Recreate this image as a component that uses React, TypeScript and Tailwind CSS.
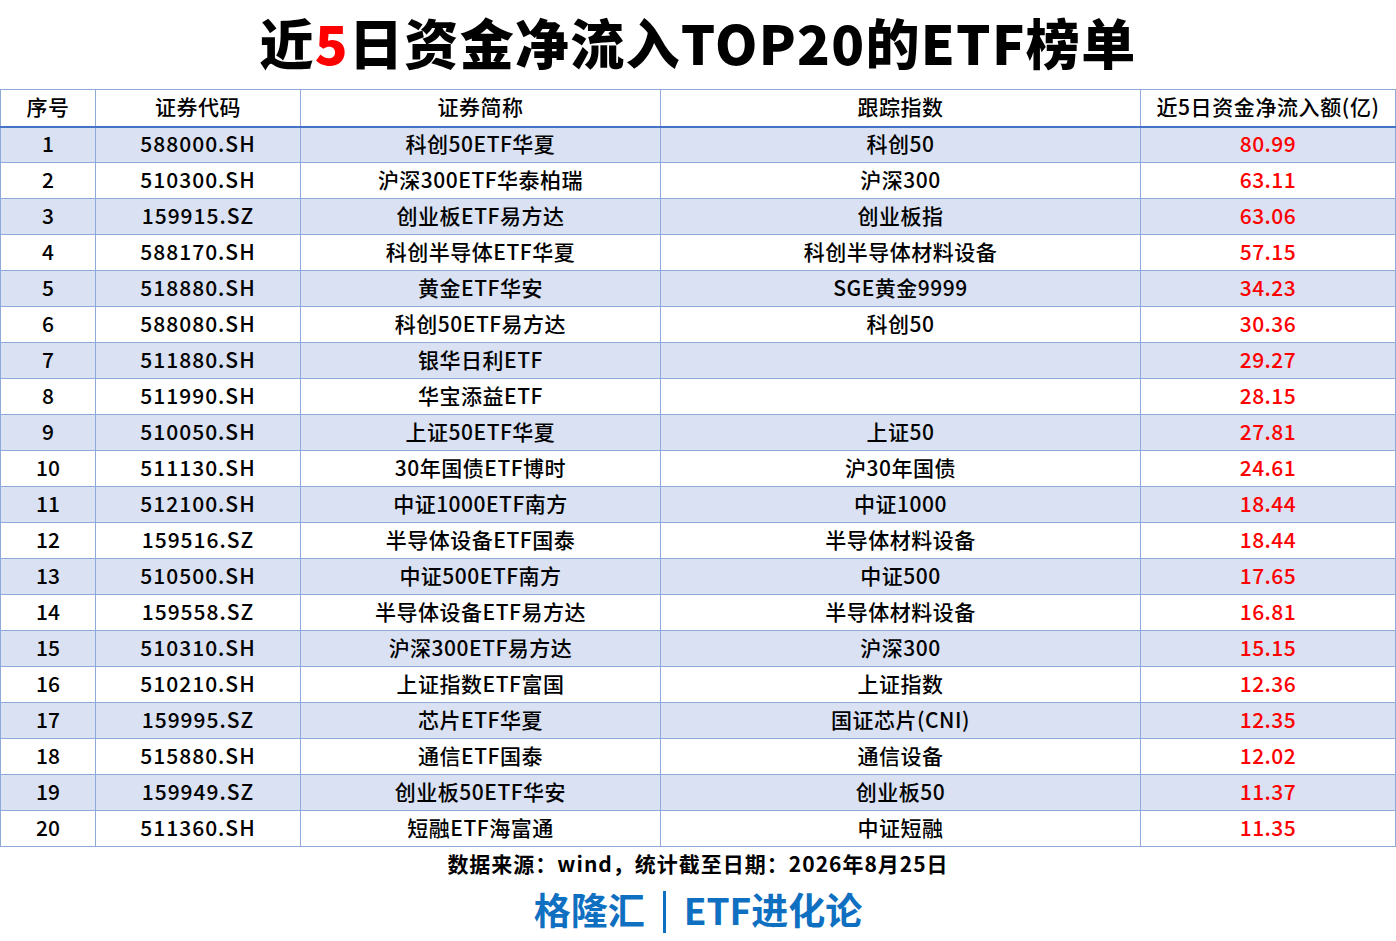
import React from 'react';

const ROWS: [string, string, string, string][] = [
  ['588000.SH', '科创50ETF华夏', '科创50', '80.99'],
  ['510300.SH', '沪深300ETF华泰柏瑞', '沪深300', '63.11'],
  ['159915.SZ', '创业板ETF易方达', '创业板指', '63.06'],
  ['588170.SH', '科创半导体ETF华夏', '科创半导体材料设备', '57.15'],
  ['518880.SH', '黄金ETF华安', 'SGE黄金9999', '34.23'],
  ['588080.SH', '科创50ETF易方达', '科创50', '30.36'],
  ['511880.SH', '银华日利ETF', '', '29.27'],
  ['511990.SH', '华宝添益ETF', '', '28.15'],
  ['510050.SH', '上证50ETF华夏', '上证50', '27.81'],
  ['511130.SH', '30年国债ETF博时', '沪30年国债', '24.61'],
  ['512100.SH', '中证1000ETF南方', '中证1000', '18.44'],
  ['159516.SZ', '半导体设备ETF国泰', '半导体材料设备', '18.44'],
  ['510500.SH', '中证500ETF南方', '中证500', '17.65'],
  ['159558.SZ', '半导体设备ETF易方达', '半导体材料设备', '16.81'],
  ['510310.SH', '沪深300ETF易方达', '沪深300', '15.15'],
  ['510210.SH', '上证指数ETF富国', '上证指数', '12.36'],
  ['159995.SZ', '芯片ETF华夏', '国证芯片(CNI)', '12.35'],
  ['515880.SH', '通信ETF国泰', '通信设备', '12.02'],
  ['159949.SZ', '创业板50ETF华安', '创业板50', '11.37'],
  ['511360.SH', '短融ETF海富通', '中证短融', '11.35'],
];

const HEADERS = ['序号', '证券代码', '证券简称', '跟踪指数', '近5日资金净流入额(亿)'];

export default function App() {
  return (
    <div className="w-[1396px] h-[941px] bg-white text-black font-['Noto_Sans_CJK_SC',sans-serif]">
      <h1 className="h-[89px] flex items-center justify-center text-[54px] font-black tracking-[1.3px] leading-none pb-[6px]">
        近<span className="text-[#ff0000]">5</span>日资金净流入TOP20的ETF榜单
      </h1>

      <table className="w-[1395px] table-fixed border-collapse text-[21px] font-medium leading-none">
        <colgroup>
          <col className="w-[95px]" />
          <col className="w-[205px]" />
          <col className="w-[360px]" />
          <col className="w-[480px]" />
          <col className="w-[255px]" />
        </colgroup>
        <thead>
          <tr className="h-[37px]">
            {HEADERS.map((h, i) => (
              <th
                key={h}
                className={`border border-[#8eaadb] border-b-2 border-b-[#4472c4] text-center font-medium p-0 pb-[2px] ${i === 4 ? 'tracking-[0.6px]' : 'tracking-[0.5px]'}`}
              >
                {h}
              </th>
            ))}
          </tr>
        </thead>
        <tbody>
          {ROWS.map((r, i) => (
            <tr key={r[0]} className={`h-[36px] ${i % 2 === 0 ? 'bg-[#d9e1f2]' : 'bg-white'}`}>
              <td className="border border-[#8eaadb] text-center p-0 pb-[2px]">{i + 1}</td>
              <td className="border border-[#8eaadb] text-center p-0 pb-[2px] tracking-[1px]">{r[0]}</td>
              <td className="border border-[#8eaadb] text-center p-0 pb-[2px] tracking-[0.5px]">{r[1]}</td>
              <td className="border border-[#8eaadb] text-center p-0 pb-[2px] tracking-[0.5px]">{r[2]}</td>
              <td className="border border-[#8eaadb] text-center p-0 pb-[2px] text-[#ff0000] tracking-[0.5px]">{r[3]}</td>
            </tr>
          ))}
        </tbody>
      </table>

      <p className="mt-[6px] text-center text-[21px] font-bold leading-none tracking-[1px]">
        数据来源：wind，统计截至日期：2026年8月25日
      </p>

      <div className="mt-[11px] flex items-center justify-center gap-[18px] text-[#0f6fc0] text-[37px] font-bold leading-none">
        <span>格隆汇</span>
        <span className="w-[3px] h-[42px] bg-[#0f6fc0] mt-[6px]" />
        <span>ETF进化论</span>
      </div>
    </div>
  );
}
